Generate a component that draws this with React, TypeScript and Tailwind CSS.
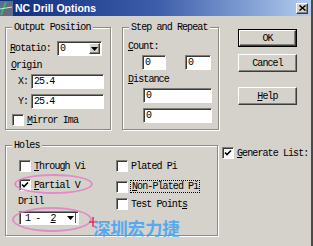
const ui = "font-['Liberation_Mono',monospace] text-[10px] leading-[11px] tracking-[-0.9px] text-black";
const sunken =
  "bg-white border border-t-[#7f7d78] border-l-[#7f7d78] border-b-white border-r-white shadow-[inset_1px_1px_0_#3a3a3a]";
const raised =
  "border border-t-white border-l-white border-b-[#3c3c3c] border-r-[#3c3c3c] shadow-[inset_-1px_-1px_0_#85827c]";
const groupBox = "relative border border-[#8d8a84] shadow-[inset_1px_1px_0_#fff,1px_1px_0_#fff]";
const bg = "bg-[#d5d2cb]";

function Group({ title, className, children }: { title: string; className: string; children?: React.ReactNode }) {
  return (
    <div className={`${groupBox} ${className}`}>
      <span className={`absolute -top-[6px] left-[6px] px-[2px] ${bg} ${ui}`}>{title}</span>
      {children}
    </div>
  );
}

function Field({ value, className }: { value: string; className: string }) {
  return (
    <div className={`${sunken} h-[15px] flex items-center pl-[2px] ${className}`}>
      <span className={ui}>{value}</span>
    </div>
  );
}

function Check({ checked = false }: { checked?: boolean }) {
  return (
    <div className={`${sunken} w-[12px] h-[12px] shrink-0 flex items-center justify-center`}>
      {checked && (
        <svg width="8" height="8" viewBox="0 0 8 8">
          <path d="M1 3.5 L3 5.5 L7 1.5" stroke="#000" strokeWidth="1.6" fill="none" />
        </svg>
      )}
    </div>
  );
}

function U({ children }: { children: React.ReactNode }) {
  return <span className="underline underline-offset-[1px]">{children}</span>;
}

function CheckRow({ checked, children, className = "" }: { checked?: boolean; children: React.ReactNode; className?: string }) {
  return (
    <div className={`flex items-center ${className}`}>
      <Check checked={checked} />
      <span className={`${ui} ml-[3px] whitespace-nowrap`}>{children}</span>
    </div>
  );
}

function Arrow() {
  return (
    <svg width="7" height="4" viewBox="0 0 7 4">
      <path d="M0 0 H7 L3.5 4 Z" fill="#000" />
    </svg>
  );
}

function Button({ children, isDefault = false, className = "" }: { children: React.ReactNode; isDefault?: boolean; className?: string }) {
  return (
    <div
      className={`${
        isDefault ? "border border-black" : ""
      } w-[59px] h-[18px] ${className}`}
    >
      <div className={`${raised} w-full h-full flex items-center justify-center ${ui}`}>{children}</div>
    </div>
  );
}

export default function App() {
  return (
    <div className={`w-[313px] h-[246px] relative overflow-hidden ${bg} border-r-2 border-r-[#4a4a4a]`}>
      {/* title bar */}
      <div className="h-[16px] flex items-center bg-gradient-to-r from-[#0e2c7c] via-[#3d5ca9] to-[#b4cdef]">
        <svg width="13" height="15" viewBox="0 0 13 15" className="shrink-0">
          <rect x="0" y="0" width="13" height="15" fill="#5a6f8a" />
          <path d="M1 14 L6 1" stroke="#3fbf6a" strokeWidth="1.5" />
          <path d="M4 14 L10 2" stroke="#c44" strokeWidth="1" />
          <path d="M0 8 L12 6" stroke="#9fd" strokeWidth="1" />
        </svg>
        <span className="ml-[2px] font-['Liberation_Sans',sans-serif] font-bold text-[10.5px] text-white leading-none">
          NC Drill Options
        </span>
        <div className={`ml-auto mr-[3px] w-[12px] h-[11px] bg-[#d5d2cb] ${raised} flex items-center justify-center`}>
          <svg width="7" height="6" viewBox="0 0 7 6">
            <path d="M0.5 0.5 L6.5 5.5 M6.5 0.5 L0.5 5.5" stroke="#000" strokeWidth="1.5" />
          </svg>
        </div>
      </div>

      <div className="pt-[11px] pl-[5px]">
        {/* top row */}
        <div className="flex items-start">
          <Group title="Output Position" className="w-[106px] h-[103px]">
            <div className="mt-[13px] flex items-center pl-[4px]">
              <span className={`${ui} w-[47px]`}>
                <U>R</U>otatio:
              </span>
              <div className={`${sunken} w-[45px] h-[15px] flex items-center`}>
                <span className={`${ui} pl-[2px] flex-1`}>0</span>
                <div className={`${raised} bg-[#d5d2cb] w-[11px] h-[11px] mr-[1px] flex items-center justify-center`}>
                  <Arrow />
                </div>
              </div>
            </div>
            <div className={`${ui} mt-[4px] pl-[5px]`}>
              <U>O</U>rigin
            </div>
            <div className="mt-[3px] flex items-center pl-[12px]">
              <span className={`${ui} w-[13px]`}>X:</span>
              <Field value="25.4" className="w-[73px]" />
            </div>
            <div className="mt-[5px] flex items-center pl-[12px]">
              <span className={`${ui} w-[13px]`}>Y:</span>
              <Field value="25.4" className="w-[73px]" />
            </div>
            <CheckRow className="mt-[5px] pl-[6px]">
              <U>M</U>irror Ima
            </CheckRow>
          </Group>

          <Group title="Step and Repeat" className="ml-[11px] w-[97px] h-[103px]">
            <div className={`${ui} mt-[13px] pl-[5px]`}>
              <U>C</U>ount:
            </div>
            <div className="mt-[3px] flex pl-[19px] gap-[19px]">
              <Field value="0" className="w-[24px]" />
              <Field value="0" className="w-[26px]" />
            </div>
            <div className={`${ui} mt-[4px] pl-[5px]`}>
              <U>D</U>istance
            </div>
            <div className="mt-[3px] pl-[20px]">
              <Field value="0" className="w-[69px]" />
            </div>
            <div className="mt-[5px] pl-[20px]">
              <Field value="0" className="w-[69px]" />
            </div>
          </Group>

          <div className="ml-[19px] mt-[2px] flex flex-col">
            <Button isDefault>OK</Button>
            <Button className="mt-[7px]">Cancel</Button>
            <Button className="mt-[15px]">
              <U>H</U>elp
            </Button>
          </div>
        </div>

        {/* bottom row */}
        <div className="mt-[15px] flex items-start">
          <Group title="Holes" className="w-[213px] h-[91px]">
            <div className="mt-[14px] pl-[13px] flex">
              <div className="w-[97px] flex flex-col">
                <CheckRow>
                  <U>T</U>hrough Vi
                </CheckRow>
                <CheckRow checked className="mt-[7px]">
                  <U>P</U>artial V
                </CheckRow>
                <span className={`${ui} mt-[5px] -ml-[1px]`}>Drill</span>
                <div className={`${sunken} mt-[4px] w-[60px] h-[14px] flex items-center`}>
                  <span className={`${ui} pl-[5px] flex-1 whitespace-pre`}>
                    1 -  <U>2</U>
                  </span>
                  <div className="w-[11px] h-[10px] mr-[2px] flex items-center justify-center border-r border-[#555]">
                    <Arrow />
                  </div>
                </div>
              </div>
              <div className="flex flex-col">
                <CheckRow>Plated Pi</CheckRow>
                <div className="mt-[8px] flex items-center">
                  <Check />
                  <span className={`${ui} ml-[2px] border border-dotted border-black px-[1px] whitespace-nowrap`}>
                    <U>N</U>on-Plated Pi
                  </span>
                </div>
                <CheckRow className="mt-[5px]">
                  Test Point<U>s</U>
                </CheckRow>
              </div>
            </div>
          </Group>
          <CheckRow checked className="ml-[4px] mt-[2px]">
            <U>G</U>enerate List:
          </CheckRow>
        </div>
      </div>

      {/* annotation overlays */}
      <div className="absolute left-[14px] top-[174px] w-[79px] h-[20px] rounded-[50%] border-2 border-[#e383c9] opacity-90" />
      <div className="absolute left-[12px] top-[207px] w-[80px] h-[25px] rounded-[50%] border-2 border-[#e383c9] opacity-90" />
      <svg className="absolute left-[88px] top-[216px]" width="10" height="12" viewBox="0 0 10 12">
        <path d="M5 1 V11 M1 6 H9" stroke="#e0304a" strokeWidth="1.5" />
      </svg>
      <span className="absolute left-[93px] top-[217px] font-['Noto_Sans_CJK_SC',sans-serif] font-bold text-[17.5px] leading-[22px] text-[#48a6f4] opacity-90 tracking-[-0.2px]">
        深圳宏力捷
      </span>
    </div>
  );
}
